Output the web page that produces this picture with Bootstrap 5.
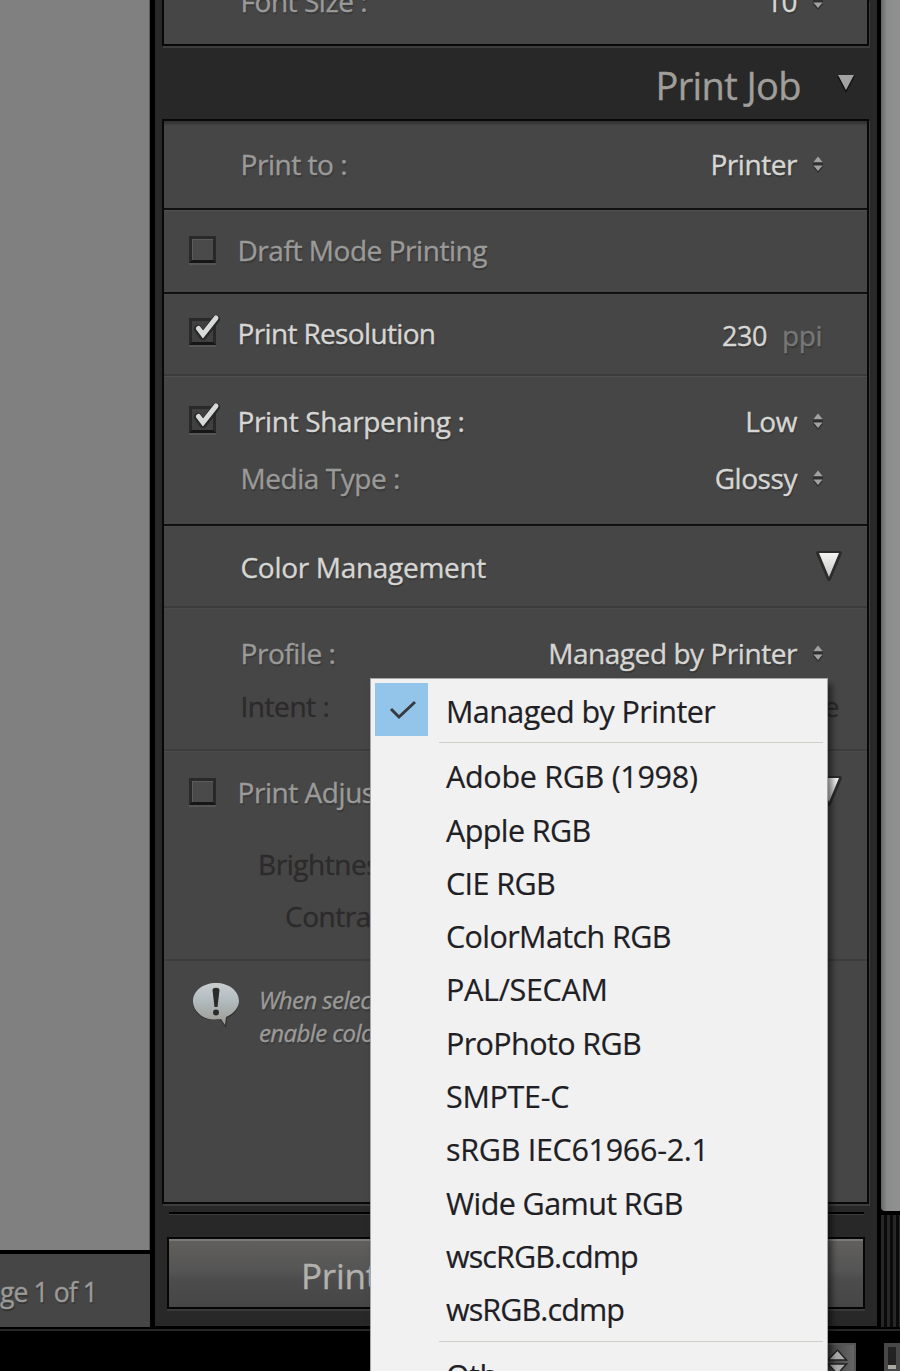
<!DOCTYPE html>
<html lang="en">
<head>
<meta charset="utf-8">
<title>Print Job</title>
<link rel="stylesheet" href="https://cdn.jsdelivr.net/npm/bootstrap@5.3.0/dist/css/bootstrap.min.css">
<style>
body{width:900px;height:1371px;overflow:hidden;background:#000;font-family:"Open Sans","Noto Sans",sans-serif;font-size:28px;line-height:34px;letter-spacing:-.45px;color:#9a9a99}
.app{width:900px;height:1371px;overflow:hidden}
.upper{height:1327px}
.canvas{width:150px}
.sheet{height:1250px;background:#808080;border-right:1px solid #5c5c5c}
.pagebar{height:73px;background:#464646;margin-top:4px;padding-top:21px;font-size:26.5px;letter-spacing:-.9px;text-shadow:1px 2px 1px #333;-webkit-text-stroke:.35px}
.dock{width:722px;margin-left:5px;background:#282828;padding:0 8px 0 7px;height:1326px;-webkit-text-stroke:.35px}
.panelbox{background:#464646;border:2px solid #080808;box-shadow:1px 2px 0 #3d3d3d;text-shadow:1px 2px 1px #383838}
.first-box{height:46px;border-top:0;display:flow-root}
.jobhead{height:73px;font-size:38px;letter-spacing:-.6px;line-height:50px;padding-right:13px;padding-top:14px;color:#a09e9a}
.jobbox{height:1085px}
.jobbox>:first-child{box-shadow:inset 0 4px 2px -1px #343436}
.opt{border-bottom:2px solid #101010;box-shadow:inset 0 1px #505050}
.opt.soft{border-color:#3c3c3c;box-shadow:inset 0 1px #4a4a4a}
.cells{padding-left:76.5px;padding-right:43px;height:34px}
.cells.chk{padding-left:25px}
.box27{width:27px;height:27px;margin-right:21.5px;margin-top:3px;background:#4a4a4a;border:3px solid #292929;border-bottom-color:#161616;box-shadow:0 2px #555,inset 1px 1px #5c5c5c;position:relative}
.box27.on{background:#404040;box-shadow:0 2px #555;margin-top:2px}
.box27 svg{position:absolute;left:2px;top:-8px}
.val{color:#d6d6d4;margin-right:15px}
.lit{color:#d6d6d4}
.off{color:#2c2a2a;text-shadow:none}
.note{font-size:24px;font-style:italic;line-height:33px;letter-spacing:-.6px}
.ruleline{height:3px;background:#000;border-bottom:1px solid #3d3d3d;margin:8px 5px 0 7px}
.printbtn{height:72px;width:698px;margin:22px 0 0 5px;border:2px solid #050505;background:linear-gradient(#62605d,#555 45%,#4c4c4d 60%,#464646);box-shadow:inset 0 2px #7b7a78,0 2px #3a3a3a;font-size:35px;padding-left:132px;line-height:73px;letter-spacing:-.2px;color:#b3b1ae}
.edge{width:19px;margin-left:4px}
.scroll{height:1211px;background:linear-gradient(90deg,#666,#8a8c8b 30%,#909291);border-radius:0 0 0 4px}
.grip{height:112px;margin-top:4px;background:repeating-linear-gradient(90deg,#272727 0 3px,#0a0a0a 3px 6px)}
.lower{height:44px;border-top:2px solid #000;box-shadow:inset 0 2px #272727}
.stepper{width:35px;height:30px;margin-left:821px;margin-top:14px;background:linear-gradient(90deg,#383838,#666);border:2px solid #555;line-height:0}
.thumb{width:20px;height:30px;margin-left:28px;margin-top:14px;border:4px solid #484848;background:linear-gradient(#222 18px,#aaa89f 18px)}
.popup{left:370px;top:678px;width:458px;height:710px;background:#f1f1f1;border:1px solid #a4a6a8;border-bottom:0;box-shadow:4px 6px 6px rgba(0,0,0,.5);padding:4px;color:#202024;font-size:30.5px;letter-spacing:-.6px;z-index:5;-webkit-text-stroke:.2px}
.entry{height:53.3px;line-height:56.3px;padding-left:18px}
.entry.wider{letter-spacing:-.3px}
.tick{width:53px;height:53px;background:#93c5ea;padding-left:2px}
.indent{padding-left:71px}
.sep{height:1px;background:#cfcfca;margin:6px 0 5px 64px}
</style>
<script src="https://cdn.jsdelivr.net/npm/bootstrap@5.3.0/dist/js/bootstrap.bundle.min.js"></script>
</head>
<body>
<svg width="0" height="0" class="position-absolute">
<defs>
<linearGradient id="gw" x1="0" y1="0" x2="0" y2="1"><stop offset="0" stop-color="#f4f4f2"/><stop offset="1" stop-color="#c8c8c6"/></linearGradient>
<linearGradient id="gb" x1="0" y1="0" x2="0" y2="1"><stop offset="0" stop-color="#c9cdcf"/><stop offset=".4" stop-color="#b3bcc0"/><stop offset="1" stop-color="#9b9a92"/></linearGradient>
<symbol id="updown" viewBox="0 0 12 20"><path d="M1 8h10v3H1zM1 12l5 6 5-6z" fill="#303030"/><path d="M1.500 7L6 1.500 10.500 7zM1.500 10.500h9L6 16z" fill="#a2a2a2"/></symbol>
<symbol id="checkon" viewBox="0 0 30 30"><path d="M4 16l5 7L22 6" fill="none" stroke="#282828" stroke-width="8" stroke-linecap="round" stroke-linejoin="round"/><path d="M4.500 15.500l4.500 6L22 5" fill="none" stroke="#d8dad9" stroke-width="5" stroke-linecap="round"/></symbol>
<symbol id="fold" viewBox="0 0 28 34"><path d="M3 3h22L14 29z" fill="#2c2c2c" stroke="#2c2c2c" stroke-width="4" stroke-linejoin="round"/><path d="M4 3h20L14 27z" fill="url(#gw)"/></symbol>
</defs>
</svg>
<div class="app position-relative d-flex flex-column">
  <div class="upper d-flex">
    <main class="canvas">
      <div class="sheet"></div>
      <div class="pagebar text-nowrap">ge 1 of 1</div>
    </main>
    <aside class="dock">
      <section class="panelbox first-box">
        <div class="cells d-flex" style="margin-top:-16px"><span>Font Size :</span><span class="val ms-auto">10</span><svg width="12" height="20" class="mt-2"><use href="#updown"/></svg></div>
      </section>
      <header class="jobhead d-flex justify-content-end"><span>Print Job</span><svg width="20" height="22" style="margin:13px 0 0 35px"><path d="M1 3h18l-9 17z" fill="#111"/><path d="M2 2h16l-8 15z" fill="#a2a2a2"/></svg></header>
      <section class="panelbox jobbox">
        <div class="opt" style="height:89px;padding-top:26px"><div class="cells d-flex"><span>Print to :</span><span class="val ms-auto">Printer</span><svg width="12" height="20" class="mt-2"><use href="#updown"/></svg></div></div>
        <div class="opt" style="height:84px;padding-top:23px"><div class="cells chk d-flex"><i class="box27"></i><span>Draft Mode Printing</span></div></div>
        <div class="opt soft" style="height:82px;padding-top:22px"><div class="cells chk d-flex lit"><i class="box27 on"><svg width="30" height="30"><use href="#checkon"/></svg></i><span style="letter-spacing:-.65px">Print Resolution</span><span class="ms-auto" style="font-size:27px;margin-top:3px;margin-right:15px">230</span><span style="color:#777;margin-top:2px;margin-right:2px">ppi</span></div></div>
        <div class="opt" style="height:150px;padding-top:28px"><div class="cells chk d-flex"><i class="box27 on"><svg width="30" height="30"><use href="#checkon"/></svg></i><span class="lit" style="letter-spacing:-.35px">Print Sharpening :</span><span class="val ms-auto">Low</span><svg width="12" height="20" class="mt-2"><use href="#updown"/></svg></div>
          <div class="cells d-flex" style="margin-top:23px"><span>Media Type :</span><span class="val ms-auto">Glossy</span><svg width="12" height="20" class="mt-2"><use href="#updown"/></svg></div></div>
        <div class="opt soft" style="height:82px;padding-top:24px"><div class="cells d-flex lit pe-4"><span style="letter-spacing:-.3px">Color Management</span><svg width="28" height="34" class="ms-auto"><use href="#fold"/></svg></div></div>
        <div class="opt soft" style="height:143px;padding-top:28px"><div class="cells d-flex"><span>Profile :</span><span class="val ms-auto">Managed by Printer</span><svg width="12" height="20" class="mt-2"><use href="#updown"/></svg></div>
          <div class="cells d-flex off" style="margin-top:19px;padding-right:28px"><span>Intent :</span><span class="ms-auto">e</span></div></div>
        <div class="opt soft" style="height:210px;padding-top:24px"><div class="cells chk d-flex" style="padding-right:24px"><i class="box27"></i><span>Print Adjus</span><svg width="28" height="34" class="ms-auto"><use href="#fold"/></svg></div>
          <div class="cells off" style="margin-top:38px;padding-left:94px">Brightnes</div>
          <div class="cells off" style="margin-top:18px;padding-left:121px">Contras</div></div>
        <div class="d-flex" style="padding:20px 0 0 27px"><svg width="50" height="50" viewBox="0 0 50 50"><path d="M25 3C12 3 2 10 2 21s10 18 20 18c3 0 5 0 7-.4L35 47l1-10c7-3 12-9 12-16C48 10 38 3 25 3z" fill="#303030"/><path d="M25 2C12 2 2 10 2 20s10 18.500 20 18.500c3 0 6 0 8-.4L34 44l1-8c7-3 13-9 13-16C48 10 38 2 25 2z" fill="url(#gb)"/><path d="M21.500 9c0-3 7-3 7 0l-2 17h-3z" fill="#2b2b2b"/><circle cx="25" cy="31.500" r="3" fill="#2b2b2b"/></svg><p class="note text-nowrap mb-0" style="margin-left:18px;margin-top:2px">When select<br>enable color</p></div>
      </section>
      <div class="ruleline"></div>
      <div class="printbtn">Print</div>
    </aside>
    <div class="edge"><div class="scroll"></div><div class="grip"></div></div>
  </div>
  <footer class="lower d-flex">
    <div class="stepper"><svg width="31" height="26" viewBox="0 4 31 26"><path d="M6 20l9.500-10 9 10zM6 24h18.500l-9 10z" transform="translate(-1 -1)" fill="#aaa" stroke="#222" stroke-width="1.500"/></svg></div>
    <div class="thumb"></div>
  </footer>
  <div class="popup position-absolute">
    <div class="entry d-flex p-0"><div class="tick d-flex align-items-center justify-content-center"><svg width="30" height="22" viewBox="0 0 28 22"><path d="M2 10l8 8L26 3" fill="none" stroke="#3a3a3e" stroke-width="3"/></svg></div><div class="entry">Managed by Printer</div></div>
    <div class="sep"></div>
    <div class="entry indent wider">Adobe RGB (1998)</div>
    <div class="entry indent">Apple RGB</div>
    <div class="entry indent">CIE RGB</div>
    <div class="entry indent">ColorMatch RGB</div>
    <div class="entry indent wider">PAL/SECAM</div>
    <div class="entry indent">ProPhoto RGB</div>
    <div class="entry indent wider">SMPTE-C</div>
    <div class="entry indent wider">sRGB IEC61966-2.1</div>
    <div class="entry indent">Wide Gamut RGB</div>
    <div class="entry indent" style="letter-spacing:-.9px">wscRGB.cdmp</div>
    <div class="entry indent" style="letter-spacing:-.9px">wsRGB.cdmp</div>
    <div class="sep"></div>
    <div class="entry indent">Oth</div>
  </div>
</div>
</body>
</html>
